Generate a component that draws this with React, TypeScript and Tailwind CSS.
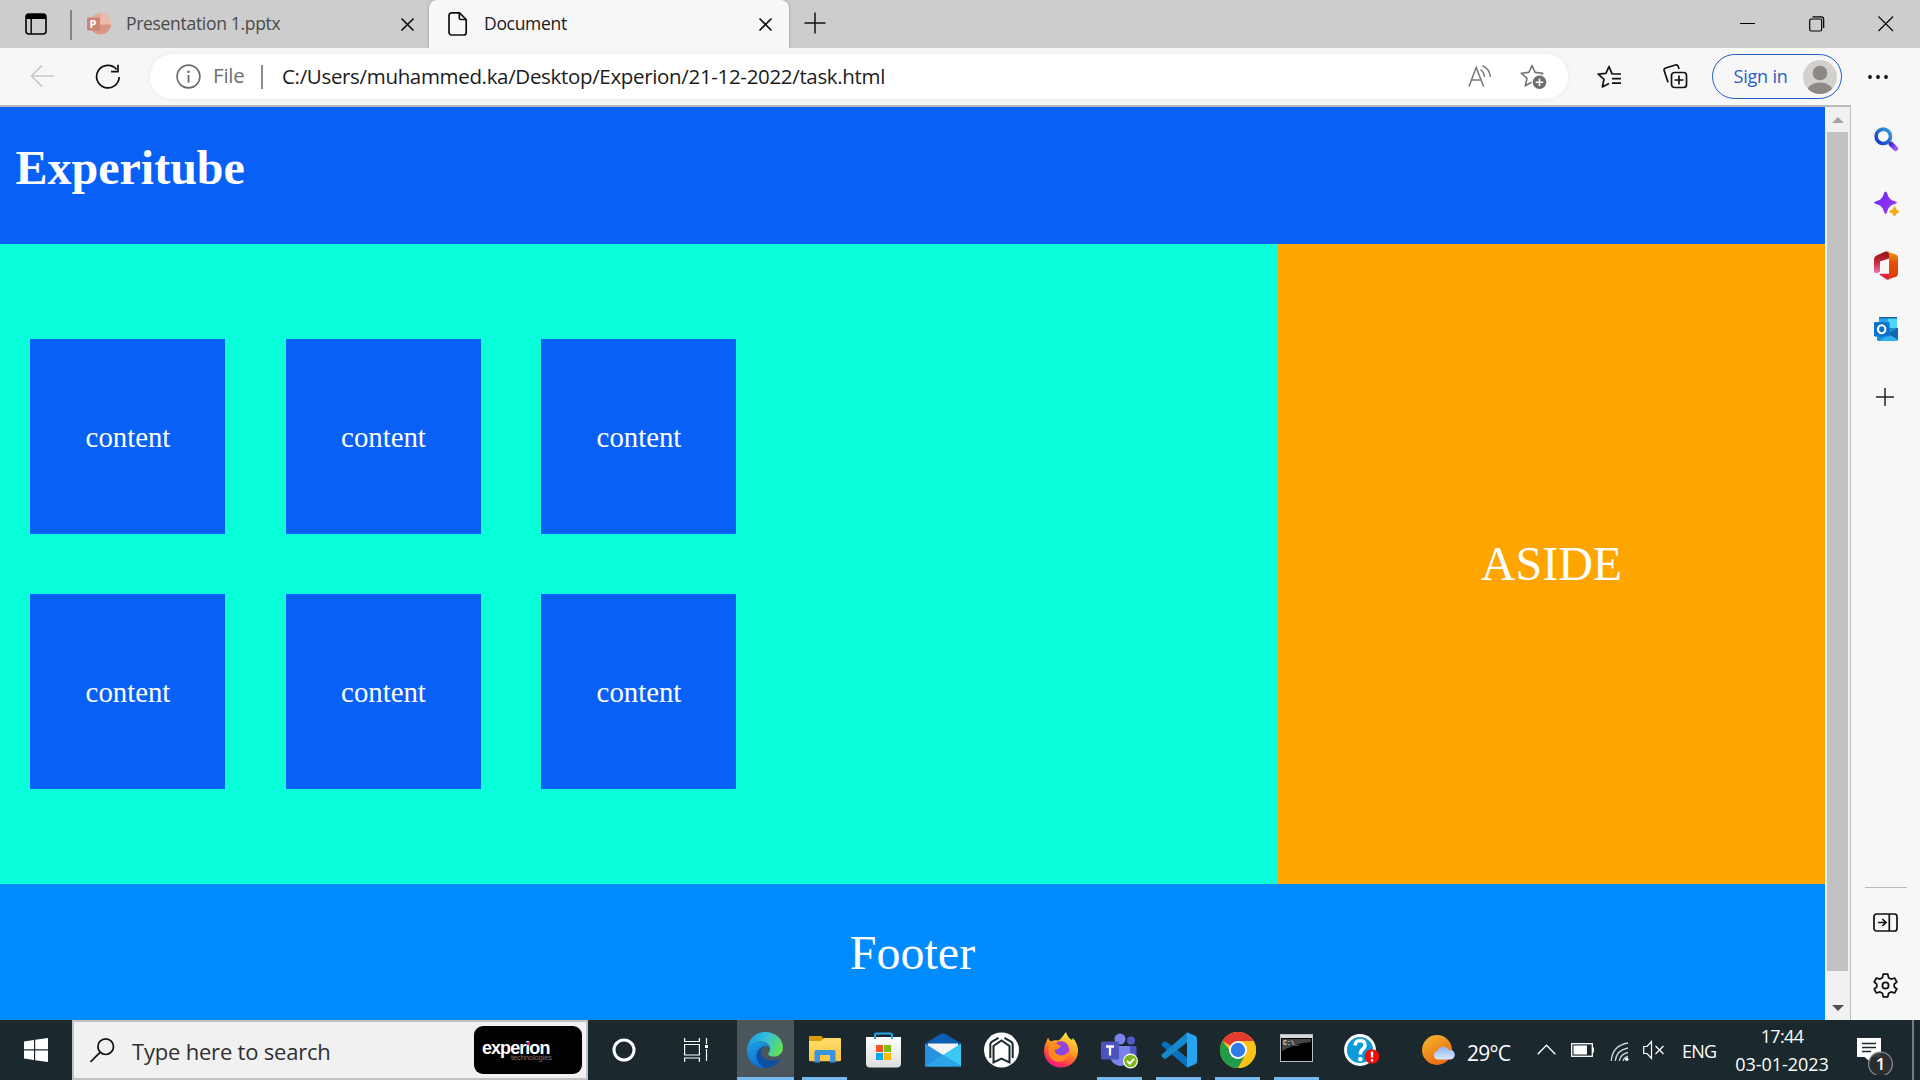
import type { ReactNode } from "react";

type IconProps = { w: number; h: number; className?: string; children: ReactNode };

function Icon({ w, h, className = "", children }: IconProps) {
  return (
    <svg width={w} height={h} viewBox={`0 0 ${w} ${h}`} fill="none" className={`shrink-0 ${className}`}>
      {children}
    </svg>
  );
}

const STAR = "M12 1.5 L15.1 8.4 L22.8 9.2 L17 14.3 L18.7 21.8 L12 18 L5.3 21.8 L7 14.3 L1.2 9.2 L8.9 8.4 Z";

function CloseGlyph({ className = "" }: { className?: string }) {
  return (
    <Icon w={15} h={15} className={className}>
      <path d="M1.5 1.5 L13.5 13.5 M13.5 1.5 L1.5 13.5" stroke="#111" strokeWidth="1.7" />
    </Icon>
  );
}

function TabStrip() {
  return (
    <div className="flex h-12 items-start bg-[#cdcdcd]">
      <Icon w={22} h={22} className="mt-[13px] ml-[25px]">
        <rect x="1" y="1" width="20" height="20" rx="3" stroke="#000" strokeWidth="1.6" />
        <path d="M1 6 V4 a3 3 0 0 1 3-3 H18 a3 3 0 0 1 3 3 V6 Z" fill="#000" />
        <path d="M6.2 6 V21" stroke="#000" strokeWidth="1.4" />
      </Icon>
      <div className="mt-2.5 ml-[23px] h-[30px] w-0.5 shrink-0 bg-[#858585]" />
      <Icon w={24} h={23} className="mt-[13px] ml-[15px]">
        <circle cx="13.5" cy="11" r="10.7" fill="#e3a896" />
        <path d="M13.5 .3 A10.7 10.7 0 0 1 24.2 11 H13.5 Z" fill="#ecb9aa" />
        <path d="M2.9 12 H24 A10.7 10.7 0 0 1 2.9 12 Z" fill="#d99684" />
        <rect x="0" y="4.5" width="13" height="13" rx="1" fill="#cd8474" />
        <text x="2.6" y="15" fontFamily="Open Sans, sans-serif" fontWeight="700" fontSize="11" fill="#fff">P</text>
      </Icon>
      <span className="ml-[15px] w-[270px] whitespace-nowrap text-[17.5px] leading-[46px] tracking-[-0.31px] text-[#4a4a4a]">
        Presentation 1.pptx
      </span>
      <CloseGlyph className="mt-[17px] ml-[3.5px]" />
      <div className="relative ml-[14.5px] flex h-12 w-[360px] shrink-0 items-start rounded-t-lg bg-[#f7f7f7] shadow-[0_0_3px_rgba(0,0,0,0.3)]">
        <Icon w={20} h={24} className="mt-3 ml-[19px]">
          <path d="M3.5 .9 H11.5 L18.2 7.5 V20.5 a2.5 2.5 0 0 1 -2.5 2.5 H3.5 A2.5 2.5 0 0 1 1 20.5 V3.4 A2.5 2.5 0 0 1 3.5 .9 Z M11.3 1 V6 a1.5 1.5 0 0 0 1.5 1.5 H18" stroke="#111" strokeWidth="1.7" />
        </Icon>
        <span className="ml-4 w-[260px] whitespace-nowrap text-[17.5px] leading-[46px] tracking-[-0.31px] text-[#1a1a1a]">Document</span>
        <CloseGlyph className="mt-[17px] ml-[14px]" />
      </div>
      <Icon w={22} h={22} className="mt-[12px] ml-[15px]">
        <path d="M11 .5 V21.5 M.5 11 H21.5" stroke="#111" strokeWidth="1.5" />
      </Icon>
      <Icon w={16} h={16} className="mt-4 ml-auto">
        <path d="M0 7.5 H15" stroke="#000" strokeWidth="1" />
      </Icon>
      <Icon w={16} h={16} className="mt-[15.5px] ml-[53px]">
        <rect x=".7" y="3" width="12" height="12" rx="1.5" stroke="#000" strokeWidth="1.2" />
        <path d="M3.5 .8 H12 a2.7 2.7 0 0 1 2.7 2.7 V12" stroke="#000" strokeWidth="1.2" />
      </Icon>
      <Icon w={16} h={16} className="mt-4 mr-[26px] ml-[53px]">
        <path d="M.5 .5 L15 15 M15 .5 L.5 15" stroke="#000" strokeWidth="1.1" />
      </Icon>
    </div>
  );
}

function Toolbar() {
  return (
    <div className="relative flex h-[57px] items-center bg-[#f7f7f7]">
      <Icon w={24} h={22} className="-mt-0.5 ml-[30px]">
        <path d="M24 11 H1.5 M12 .7 L1.3 11 L12 21.3" stroke="#c9c9c9" strokeWidth="1.6" />
      </Icon>
      <Icon w={26} h={26} className="ml-[41px]">
        <path d="M21.6 5.4 A11.3 11.3 0 1 0 24.2 13" stroke="#111" strokeWidth="1.7" />
        <path d="M23 .8 V7.6 H16" stroke="#111" strokeWidth="1.7" />
      </Icon>
      <div className="ml-[29px] flex h-[45px] w-[1418px] items-center rounded-full bg-white shadow-[0_0_6px_rgba(0,0,0,0.06)]">
        <Icon w={25} h={25} className="ml-[26px]">
          <circle cx="12.5" cy="12.5" r="11.4" stroke="#6b6b6b" strokeWidth="1.6" />
          <path d="M12.5 11 V18.5" stroke="#6b6b6b" strokeWidth="1.8" />
          <circle cx="12.5" cy="7.7" r="1.3" fill="#6b6b6b" />
        </Icon>
        <span className="-mt-0.5 ml-[12px] w-[34px] whitespace-nowrap text-[20.5px] tracking-[-0.2px] text-[#717171]">File</span>
        <div className="ml-[13.5px] h-6 w-0.5 bg-[#8a8a8a]" />
        <span className="-mt-0.5 ml-[19.5px] whitespace-nowrap text-[20.5px] leading-6 tracking-[-0.33px] text-[#1b1b1b]">
          C:/Users/muhammed.ka/Desktop/Experion/21-12-2022/task.html
        </span>
        <Icon w={24} h={23} className="ml-auto">
          <path d="M1 21.5 L8.2 2.5 L15.6 21.5 M3.4 15 H13" stroke="#7a7a7a" strokeWidth="1.6" />
          <path d="M12.6 4.6 Q16 6.8 16.4 12 M14.5 .8 Q21.6 4 22.4 12" stroke="#7a7a7a" strokeWidth="1.5" />
        </Icon>
        <Icon w={27} h={26} className="mr-[21px] ml-[28px]">
          <path d={STAR} stroke="#747474" strokeWidth="1.6" strokeLinejoin="round" />
          <circle cx="19.5" cy="18.3" r="8" fill="#fff" />
          <circle cx="19.5" cy="18.3" r="6.8" fill="#6e6e6e" />
          <path d="M19.5 14.5 V22 M15.7 18.3 H23.3" stroke="#fff" strokeWidth="1.6" />
        </Icon>
      </div>
      <Icon w={25} h={24} className="ml-[29px]">
        <path d="M15 9 L12 1.5 L8.9 8.4 L1.2 9.2 L7 14.3 L5.3 22 L12 18.6 M12 1.5 L15.2 9 H24" stroke="#111" strokeWidth="1.7" strokeLinejoin="round" />
        <path d="M15 13.6 H24 M15 18.2 H24" stroke="#111" strokeWidth="1.7" />
      </Icon>
      <Icon w={25} h={25} className="ml-[41px]">
        <path d="M5.5 18 L4.8 17.6 L1.2 6.8 Q.6 4.8 2.6 4 L12.3 1 Q14.5 .5 15.3 2.5 L16 5" stroke="#111" strokeWidth="1.7" />
        <rect x="8.5" y="8.5" width="15" height="15" rx="3" stroke="#111" strokeWidth="1.7" />
        <path d="M16 11.5 V20.5 M11.5 16 H20.5" stroke="#111" strokeWidth="1.7" />
      </Icon>
      <div className="ml-[24px] flex h-[45px] w-[130px] shrink-0 items-center rounded-full border-[1.5px] border-[#1f5dc4] text-[#2560c2]">
        <span className="ml-[20.5px] w-[56px] whitespace-nowrap text-[18px] tracking-[-0.2px]">Sign in</span>
        <Icon w={34} h={34} className="mt-px ml-[13px]">
          <clipPath id="avatar"><circle cx="17" cy="17" r="17" /></clipPath>
          <g clipPath="url(#avatar)">
            <rect width="34" height="34" fill="#d3d1ce" />
            <circle cx="17" cy="13" r="7.3" fill="#8b8886" />
            <ellipse cx="17" cy="33" rx="13.5" ry="10.5" fill="#8b8886" />
          </g>
        </Icon>
      </div>
      <Icon w={20} h={4} className="ml-[26px]">
        <circle cx="2" cy="2" r="1.9" fill="#111" />
        <circle cx="10" cy="2" r="1.9" fill="#111" />
        <circle cx="18" cy="2" r="1.9" fill="#111" />
      </Icon>
    </div>
  );
}

function Page() {
  return (
    <div className="flex w-[1825px] flex-col font-['Liberation_Serif',serif] text-white">
      <header className="flex h-[137px] items-start bg-[#0860f7] pl-[15.5px]">
        <h1 className="mt-[33px] text-[48px] leading-[55px] font-bold">Experitube</h1>
      </header>
      <div className="flex h-[640px]">
        <main className="grid w-[1278px] grid-cols-[repeat(3,195px)] content-center gap-x-[60.5px] gap-y-[60px] bg-[#08ffd9] pl-[30px]">
          {[1, 2, 3, 4, 5, 6].map((n) => (
            <div key={n} className="flex h-[195px] items-center justify-center bg-[#0860f7] pl-px text-[28.8px] leading-8">
              content
            </div>
          ))}
        </main>
        <aside className="flex flex-1 items-center justify-center bg-[#ffa500] text-[48px] leading-[54px]">ASIDE</aside>
      </div>
      <footer className="flex h-[136px] items-center justify-center bg-[#008cff] pt-px text-[48px] leading-[54px]">Footer</footer>
    </div>
  );
}

function Scrollbar() {
  return (
    <div className="flex w-[26px] flex-col items-center border-r border-[#bdbdbd] bg-[#f1f1f1]">
      <Icon w={12} h={6} className="mt-2.5"><path d="M0 6 L6 0 L12 6 Z" fill="#a3a3a3" /></Icon>
      <div className="mt-[9px] h-[839px] w-[21px] bg-[#c1c1c1]" />
      <Icon w={12} h={6} className="mt-[34px]"><path d="M0 0 L6 6 L12 0 Z" fill="#505050" /></Icon>
    </div>
  );
}

const GEAR =
  "M10.2 1.2 H14.8 L15.6 4.7 L18 6.1 L21.6 5 L23.8 9 L21.2 11.2 V13.8 L23.8 16 L21.6 20 L18 18.9 L15.6 20.3 L14.8 23.8 H10.2 L9.4 20.3 L7 18.9 L3.4 20 L1.2 16 L3.8 13.8 V11.2 L1.2 9 L3.4 5 L7 6.1 L9.4 4.7 Z";

function Sidebar() {
  return (
    <div className="flex flex-1 flex-col bg-[#f7f7f7] pl-[23px]">
      <Icon w={25} h={25} className="mt-[22px]">
        <defs>
          <linearGradient id="lens" x1="1" y1="0" x2="0" y2="1"><stop stopColor="#3aa0dc" /><stop offset="1" stopColor="#1238c4" /></linearGradient>
          <linearGradient id="handle" x1="0" y1="0" x2="1" y2="1"><stop stopColor="#4b2fd6" /><stop offset="1" stopColor="#a456ff" /></linearGradient>
        </defs>
        <circle cx="9.3" cy="9.3" r="7.2" stroke="url(#lens)" strokeWidth="3.6" fill="#fbfbfb" />
        <path d="M14.8 15 L17.5 17.5" stroke="#444" strokeWidth="2" />
        <path d="M17.2 17.2 L21.5 21.5" stroke="url(#handle)" strokeWidth="5" strokeLinecap="round" />
      </Icon>
      <Icon w={26} h={26} className="mt-[38.5px]">
        <defs><linearGradient id="spark" x1="0" y1="0" x2="1" y2="1"><stop stopColor="#4a3cf5" /><stop offset=".5" stopColor="#8a2df5" /><stop offset="1" stopColor="#9a4ae8" /></linearGradient></defs>
        <path d="M11.5 .5 Q12.8 .5 13.6 3.5 Q15 8.6 19.5 9.8 Q23 10.8 23 11.6 Q23 12.6 19.5 13.5 Q15 14.8 13.6 19.5 Q12.8 23 11.5 23 Q10.3 23 9.5 19.5 Q8.2 14.8 3.5 13.5 Q0 12.6 0 11.6 Q0 10.8 3.5 9.8 Q8.2 8.6 9.5 3.5 Q10.3 .5 11.5 .5 Z" fill="url(#spark)" />
        <path d="M20.5 15.5 Q21.6 19.6 25 20.6 Q21.6 21.6 20.5 25.2 Q19.4 21.6 15.4 20.6 Q19.4 19.6 20.5 15.5 Z" fill="#f0ae0e" stroke="#f0ae0e" />
      </Icon>
      <Icon w={24} h={29} className="mt-[34px]">
        <defs>
          <linearGradient id="offl" x1="0" y1="0" x2="0" y2="1"><stop stopColor="#8f1016" /><stop offset=".5" stopColor="#c72a36" /><stop offset="1" stopColor="#e878b8" /></linearGradient>
          <linearGradient id="offr" x1="0" y1="0" x2="0" y2="1"><stop stopColor="#f7a10a" /><stop offset=".4" stopColor="#e4500c" /><stop offset="1" stopColor="#d63a04" /></linearGradient>
        </defs>
        <path d="M11.5 .5 L2.5 4.500 Q0 5.600 0 8.500 V21.500 L3.500 22.300 L6 20.500 V10.500 L15 7.500 V.8 Z" fill="url(#offl)" />
        <path d="M5 23.200 L12.500 28.600 H15.500 V22.800 H6.500 Z" fill="#e02448" />
        <path d="M12.500 .3 L21.500 3.200 Q24 4 24 6.500 V22.500 Q24 25 21.500 26 L12.500 28.800 L15 27 V2.800 Z" fill="url(#offr)" />
      </Icon>
      <Icon w={24} h={24} className="mt-[37px]">
        <path d="M5 1.5 Q5 0 6.5 0 H21.5 Q23 0 23 1.5 V12 H5 Z" fill="#28a8ea" />
        <path d="M14 1 H23 V11 H14 Z" fill="#4fd8ff" />
        <path d="M5 0 H23 V1.5 H5 Z" fill="#0b64ad" />
        <path d="M3 11 L24 11 V22.5 Q24 24 22.5 24 H4.5 Q3 24 3 22.5 Z" fill="#1b8fdc" />
        <path d="M24 10.5 L13.5 17 L24 23.5 Z" fill="#1068b0" />
        <path d="M24 22.8 L14 17 L6 24 H22.5 Z" fill="#2fb1ee" />
        <rect x="0" y="5" width="15.5" height="14.5" rx="1.3" fill="#0a72cc" />
        <ellipse cx="7.7" cy="12.2" rx="3.7" ry="4" stroke="#fff" strokeWidth="2.1" />
      </Icon>
      <Icon w={18} h={18} className="mt-[47px] ml-0.5">
        <path d="M9 0 V18 M0 9 H18" stroke="#222" strokeWidth="1.5" />
      </Icon>
      <div className="mt-auto -ml-[9px] h-px w-[42px] bg-[#b8b8b8]" />
      <Icon w={25} h={19} className="mt-[25px] -ml-px">
        <rect x="1" y="1" width="23" height="17" rx="2.5" stroke="#111" strokeWidth="1.7" />
        <path d="M16.3 1 V18 M5 9.5 H13 M9.3 6 L13 9.5 L9.3 13" stroke="#111" strokeWidth="1.7" />
      </Icon>
      <Icon w={25} h={25} className="mt-[41px] mb-[22px] -ml-px">
        <path d={GEAR} stroke="#111" strokeWidth="1.7" strokeLinejoin="round" />
        <circle cx="12.5" cy="12.5" r="3.1" stroke="#111" strokeWidth="1.8" />
      </Icon>
    </div>
  );
}

function TaskButton({ open = false, children }: { open?: boolean; children: ReactNode }) {
  return (
    <div className="flex h-[60px] w-[59px] shrink-0 flex-col items-center justify-between">
      <div className="flex h-[57px] items-center justify-center pt-0.5">{children}</div>
      {open && <div className="h-[3px] w-[45px] bg-[#76b9ed]" />}
    </div>
  );
}

function EdgeIcon() {
  return (
    <Icon w={36} h={36}>
      <defs>
        <linearGradient id="edgeTop" x1="0" y1=".3" x2="1" y2=".6"><stop stopColor="#1b9de2" /><stop offset=".5" stopColor="#35c1d8" /><stop offset="1" stopColor="#64e34c" /></linearGradient>
        <linearGradient id="edgeLeft" x1="0" y1="0" x2=".5" y2="1"><stop stopColor="#1fa0e6" /><stop offset="1" stopColor="#0a6fd0" /></linearGradient>
      </defs>
      <path d="M0 17.5 C.8 7.5 8.5 0 18 0 C28.5 0 36 7 36 15.5 C36 21.3 31.6 24.6 27 24.6 C23.3 24.6 21.2 23.3 21.2 21.9 C21.2 21 23 19.8 23 16.8 C23 13 19 9.2 13.2 9.2 C6.6 9.2 1.4 13 0 17.5 Z" fill="url(#edgeTop)" />
      <path d="M0 17.5 C1.4 12.6 6.6 9.2 12.6 9.2 C18.5 9.2 22.8 12.6 23 16 C21.8 14.4 20 13.8 18 13.9 C13.5 15 9.6 18.5 9.6 23.8 C9.6 30 14.5 35 21 35.7 C9.5 38 -.6 29.5 0 17.5 Z" fill="url(#edgeLeft)" />
      <path d="M18 13.9 C13.3 16.5 12.4 20.5 15.5 24.6 C19.5 29.3 26.5 29.8 32.2 26.7 C33.2 26.3 33.7 27 33.2 27.8 C30.4 32.2 26 35.4 20.6 35.8 C13.8 35 9.6 30 9.6 23.8 C9.6 18.5 13.5 14.8 18 13.9 Z" fill="#0d4fa0" />
    </Icon>
  );
}

function Taskbar() {
  return (
    <div className="flex h-[60px] items-start bg-[#1b292e]">
      <Icon w={24} h={24} className="mt-[18px] ml-6">
        <path d="M0 3.4 L10 2 V11.3 H0 Z M11.2 1.8 L24 0 V11.3 H11.2 Z M0 12.5 H10 V22 L0 20.6 Z M11.2 12.5 H24 V24 L11.2 22.2 Z" fill="#fff" />
      </Icon>
      <div className="ml-6 flex h-[60px] w-[516px] shrink-0 items-center border-2 border-[#c1c1c1] bg-[#f1f1f1]">
        <Icon w={25} h={25} className="ml-4">
          <circle cx="15.7" cy="8.7" r="7.8" stroke="#111" strokeWidth="1.7" />
          <path d="M10 14.3 L.5 24" stroke="#111" strokeWidth="1.7" />
        </Icon>
        <span className="ml-[17px] pt-[3px] whitespace-nowrap text-[22px] tracking-[-0.2px] text-[#2f2f2f]">Type here to search</span>
        <div className="mr-1 ml-auto flex h-12 w-[108px] flex-col rounded-[9px] bg-black pl-2 font-['Liberation_Sans',sans-serif]">
          <div className="relative mt-[15px] flex h-[14px]">
            <span className="text-[18px] leading-[14px] font-bold tracking-[-0.95px] text-white">experion</span>
            <div className="absolute top-px left-[45px] h-[2.5px] w-[2.5px] bg-[#e01040]" />
          </div>
          <span className="ml-[29px] text-[7.5px] leading-[6px] tracking-[-0.1px] text-[#777]">technologies</span>
        </div>
      </div>
      <Icon w={24} h={24} className="mt-[18px] ml-6"><circle cx="12" cy="12" r="10" stroke="#fff" strokeWidth="3" /></Icon>
      <Icon w={24} h={24} className="mt-[18px] ml-12">
        <path d="M.6 0 V3.5 H15.4 V0 M.6 24 V20 H15.4 V24 M.6 6.5 H15.4 V17 H.6 Z M22.5 0 V6 M22.5 11 V23" stroke="#fff" strokeWidth="1.2" />
        <rect x="21" y="7" width="3" height="3" fill="#fff" />
      </Icon>
      <div className="mr-px ml-[29px] flex h-[60px] w-[57px] shrink-0 flex-col items-center bg-[#4a565b]">
        <div className="flex h-[57px] items-center pt-[3px] pr-px"><EdgeIcon /></div>
        <div className="h-[3px] w-full bg-[#76b9ed]" />
      </div>
      <TaskButton open>
        <Icon w={32} h={28}>
          <defs><linearGradient id="folder" x1="0" y1="0" x2="0" y2="1"><stop stopColor="#ffdd6e" /><stop offset="1" stopColor="#f9c53a" /></linearGradient></defs>
          <path d="M0 1 Q0 0 1 0 H12 Q13 0 14 1.5 V8 H0 Z" fill="#dd9a05" />
          <path d="M0 5 H12 L15 2 H31 Q32 2 32 3 V24 Q32 25.3 30.7 25.3 H1.3 Q0 25.3 0 24 Z" fill="url(#folder)" />
          <path d="M5.5 26.6 V15.5 Q5.5 14 7 14 H25 Q26.5 14 26.5 15.5 V26.6 H21 V19 H11 V26.6 Z" fill="#3a94de" />
        </Icon>
      </TaskButton>
      <TaskButton>
        <Icon w={36} h={36}>
          <defs><linearGradient id="bag" x1="0" y1="0" x2="0" y2="1"><stop stopColor="#fff" /><stop offset="1" stopColor="#dedede" /></linearGradient></defs>
          <path d="M0 5 H35 V31.5 Q35 35.5 31 35.5 H4 Q0 35.5 0 31.5 Z" fill="url(#bag)" />
          <path d="M9 7 V3 Q9 1.5 10.5 1.5 H24.5 Q26 1.5 26 3 V7" stroke="#22a7e8" strokeWidth="2" />
          <rect x="10" y="13" width="7" height="7" fill="#f35325" />
          <rect x="18" y="13" width="7" height="7" fill="#81bc06" />
          <rect x="10" y="21" width="7" height="7" fill="#05a6f0" />
          <rect x="18" y="21" width="7" height="7" fill="#ffba08" />
        </Icon>
      </TaskButton>
      <TaskButton>
        <Icon w={36} h={34}>
          <path d="M0 10.5 L16 .8 Q18 -.2 20 .8 L36 10.5 V20 H0 Z" fill="#0a5fb5" />
          <path d="M3 10.5 H33 V20 L18 25 L3 20 Z" fill="#f4f4f4" />
          <path d="M0 10.5 L36 33.5 H0 Z" fill="#2593e2" />
          <path d="M36 10.5 V33.5 L18 22 Z" fill="#3cc8f7" />
          <path d="M0 33.5 L18 21.6 L36 33.5 Z" fill="#2ba5e8" />
        </Icon>
      </TaskButton>
      <TaskButton>
        <Icon w={36} h={36}>
          <circle cx="17.5" cy="18" r="17.5" fill="#fff" />
          <path d="M6.3 26 V12.500 Q6.300 10.800 7.700 9.900 L14.500 5.800 M28.700 26 V12.500 Q28.700 10.800 27.300 9.900 L20.500 5.800" stroke="#1b292e" strokeWidth="2" />
          <path d="M9.500 30.500 V14 L17.500 8.500 L25.500 14 V30.500 L17.500 26.500 Z" fill="#fff" stroke="#1b292e" strokeWidth="2" />
        </Icon>
      </TaskButton>
      <TaskButton>
        <Icon w={36} h={36}>
          <defs>
            <linearGradient id="fox" x1=".8" y1="0" x2=".3" y2="1"><stop stopColor="#fff04a" /><stop offset=".45" stopColor="#ff9d1c" /><stop offset=".8" stopColor="#ff3850" /><stop offset="1" stopColor="#f5148c" /></linearGradient>
            <radialGradient id="foxGlobe"><stop stopColor="#6e50f0" /><stop offset="1" stopColor="#a63ad0" /></radialGradient>
          </defs>
          <path d="M5 5.5 Q6 8.5 8 9.5 Q12 7.5 15 8.5 Q18 7 20 4 Q22 1 23 0 Q24 5 29 8 L30 6 Q35 12 35 19 C35 28 27.5 35.5 18 35.5 C8.5 35.5 1 28 1 19 Q1 13.5 3 10.5 Z" fill="url(#fox)" />
          <circle cx="18" cy="17.5" r="8.2" fill="url(#foxGlobe)" />
          <path d="M5 12 Q11 8 18 14.5 Q14.5 18 11.5 17.8 Q12 23 18 23.5 Q22 23.5 25 20 Q26 27 19 29.5 Q10 31 6 24 Z" fill="#ff8a1f" />
        </Icon>
      </TaskButton>
      <TaskButton open>
        <Icon w={38} h={36} className="mt-0.5">
          <circle cx="19" cy="6" r="5.5" fill="#7b83eb" />
          <circle cx="30" cy="7.5" r="4" fill="#5059c9" />
          <path d="M24 13 H34 Q35.5 13 35.5 14.5 V22 Q35 28 28 28 H24 Z" fill="#4f57c5" />
          <path d="M9 13 H27 Q29 13 29 15 V24 Q28 33 19 33 Q11 32 9 24 Z" fill="#7b83eb" />
          <rect x="0" y="8.5" width="18" height="18" rx="1.5" fill="#4b53bc" />
          <path d="M5 13.5 H13 M9 13.5 V22.5" stroke="#fff" strokeWidth="2.3" />
          <circle cx="29.5" cy="28" r="7.5" fill="#fff" />
          <circle cx="29.5" cy="28" r="6.3" fill="#7db71a" />
          <path d="M26 28 L28.8 30.6 L33 25.8" stroke="#fff" strokeWidth="1.9" />
        </Icon>
      </TaskButton>
      <TaskButton open>
        <Icon w={36} h={36}>
          <path d="M.8 11.5 L3 9.5 Q4 9 5 9.6 L26 25.5 V35.6 L.8 13.5 Q0 12.5 .8 11.5 Z" fill="#0a70bb" />
          <path d="M.8 24.5 L3 26.5 Q4 27 5 26.4 L26 10.5 V.4 L.8 22.5 Q0 23.5 .8 24.5 Z" fill="#1588d0" />
          <path d="M26 .2 L34.5 4 Q36 4.8 36 6.3 V29.7 Q36 31.2 34.5 32 L26 35.8 Z" fill="#27a5f0" />
        </Icon>
      </TaskButton>
      <TaskButton open>
        <Icon w={36} h={36}>
          <circle cx="18" cy="18" r="18" fill="#fbc116" />
          <path d="M18 18 L2.4 9 A18 18 0 0 1 33.6 9 H18 Z" fill="#e33b2e" />
          <path d="M2.4 9 A18 18 0 0 0 18 36 L25.8 22.5 L18 18 H9.5 Z" fill="#219a4a" />
          <path d="M18 9 H33.6 A18 18 0 0 1 18 36 L25.8 22.5 Z" fill="#fbc116" />
          <circle cx="18" cy="18" r="9" fill="#fff" />
          <circle cx="18" cy="18" r="7.2" fill="#2f7be8" />
        </Icon>
      </TaskButton>
      <TaskButton open>
        <Icon w={33} h={28} className="-mt-1">
          <rect x=".5" y=".5" width="32" height="27" fill="#000" stroke="#b9bec1" />
          <path d="M1 1 H32 V4 H1 Z" fill="#d5d9dc" />
          <path d="M2 5 H31 V8 Q16 9 2 17 Z" fill="#444" />
          <text x="3" y="11" fontFamily="Liberation Mono, monospace" fontWeight="700" fontSize="6.5" fill="#ddd">C:\_</text>
        </Icon>
      </TaskButton>
      <TaskButton>
        <Icon w={36} h={34} className="ml-3">
          <circle cx="16" cy="17" r="14.5" fill="#0c9bd8" stroke="#fff" strokeWidth="2.8" />
          <path d="M11 12.5 Q11.5 7.5 16.2 7.5 Q21 7.8 21 12 Q21 14.5 18.5 16.3 Q16.3 18 16.3 21.5" stroke="#fff" strokeWidth="3.5" />
          <circle cx="16.3" cy="26.3" r="2.3" fill="#fff" />
          <circle cx="28" cy="23.5" r="7.3" fill="#f20d0d" />
          <path d="M28 18.5 V24.5 M28 26.3 V28.6" stroke="#fff" strokeWidth="2.3" />
        </Icon>
      </TaskButton>
      <Icon w={34} h={32} className="mt-[15px] ml-auto">
        <defs>
          <linearGradient id="sun" x1="0" y1="0" x2=".6" y2="1"><stop stopColor="#f2b92d" /><stop offset="1" stopColor="#ee6a12" /></linearGradient>
          <linearGradient id="cloud" x1="0" y1="0" x2="0" y2="1"><stop stopColor="#8db5f0" /><stop offset="1" stopColor="#dbe8fb" /></linearGradient>
        </defs>
        <circle cx="15" cy="15" r="15" fill="url(#sun)" />
        <path d="M16 24.500 A4.300 4.300 0 0 1 15.500 16 A6 6 0 0 1 26.500 14.800 A5 5 0 0 1 29 24.500 Z" fill="url(#cloud)" />
      </Icon>
      <span className="mt-[17px] ml-[11px] w-[46px] whitespace-nowrap text-[21px] leading-8 tracking-[-0.75px] text-white">29°C</span>
      <Icon w={19} h={11} className="mt-[24px] ml-[24px]"><path d="M.7 10.300 L9.500 1.200 L18.300 10.300" stroke="#fff" strokeWidth="1.300" /></Icon>
      <Icon w={23} h={14} className="mt-[23px] ml-[15px]">
        <rect x=".7" y=".7" width="20.600" height="12.600" stroke="#fff" strokeWidth="1.300" />
        <rect x="2.500" y="2.500" width="13.500" height="9" fill="#fff" />
        <path d="M22.300 4.500 V9.500" stroke="#fff" strokeWidth="1.400" />
      </Icon>
      <Icon w={19} h={20} className="mt-[22px] ml-4">
        <g stroke="#cfd3d4" strokeWidth="1.300">
          <path d="M1.200 19 Q2.500 3.500 18 1" />
          <path d="M5.200 19 Q6.500 8 18 6" />
          <path d="M9.300 19 Q10.500 12 18 10.500" />
          <path d="M13 19 Q14 15.500 18 14.500" />
        </g>
        <circle cx="16.800" cy="17.300" r="1.700" fill="#fff" />
      </Icon>
      <Icon w={22} h={20} className="mt-[20px] ml-[14px]">
        <path d="M.7 6.500 H4 L8.500 1.500 V18.500 L4 13.500 H.7 Z M12.500 6 L20.500 14 M20.500 6 L12.500 14" stroke="#fff" strokeWidth="1.200" />
      </Icon>
      <span className="mt-[15px] ml-[17px] w-[36px] whitespace-nowrap text-[18px] leading-8 tracking-[-0.8px] text-white">ENG</span>
      <div className="ml-[16px] flex w-[96px] shrink-0 flex-col items-center whitespace-nowrap text-[18px] leading-7 text-white">
        <span className="mt-[2px] tracking-[-0.65px]">17:44</span>
        <span className="tracking-[-0.05px]">03-01-2023</span>
      </div>
      <Icon w={38} h={38} className="mt-[17px] ml-[27px]">
        <path d="M0 1 H24 V20 H14 V25.500 L7.500 20 H0 Z" fill="#fff" />
        <path d="M5 6.500 H19 M5 10.500 H19 M5 14.500 H14" stroke="#1b292e" strokeWidth="1.300" />
        <circle cx="23.500" cy="27" r="11.900" fill="#2b2f31" fillOpacity=".92" stroke="#8d9092" strokeWidth="1.200" />
        <text x="23.500" y="33" textAnchor="middle" fontFamily="Open Sans, sans-serif" fontWeight="600" fontSize="17" fill="#fff">1</text>
      </Icon>
      <div className="mr-1.5 ml-[17px] h-[60px] w-0.5 shrink-0 bg-[#757b7d]" />
    </div>
  );
}

export default function App() {
  return (
    <div className="flex h-[1080px] w-[1920px] flex-col overflow-hidden font-['Open_Sans','Noto_Sans',sans-serif]">
      <TabStrip />
      <Toolbar />
      <div className="flex h-[915px]">
        <div className="flex w-[1851px] shrink-0 flex-col">
          <div className="h-0.5 bg-[#b9b9b9]" />
          <div className="flex h-[913px]">
            <Page />
            <Scrollbar />
          </div>
        </div>
        <Sidebar />
      </div>
      <Taskbar />
    </div>
  );
}
